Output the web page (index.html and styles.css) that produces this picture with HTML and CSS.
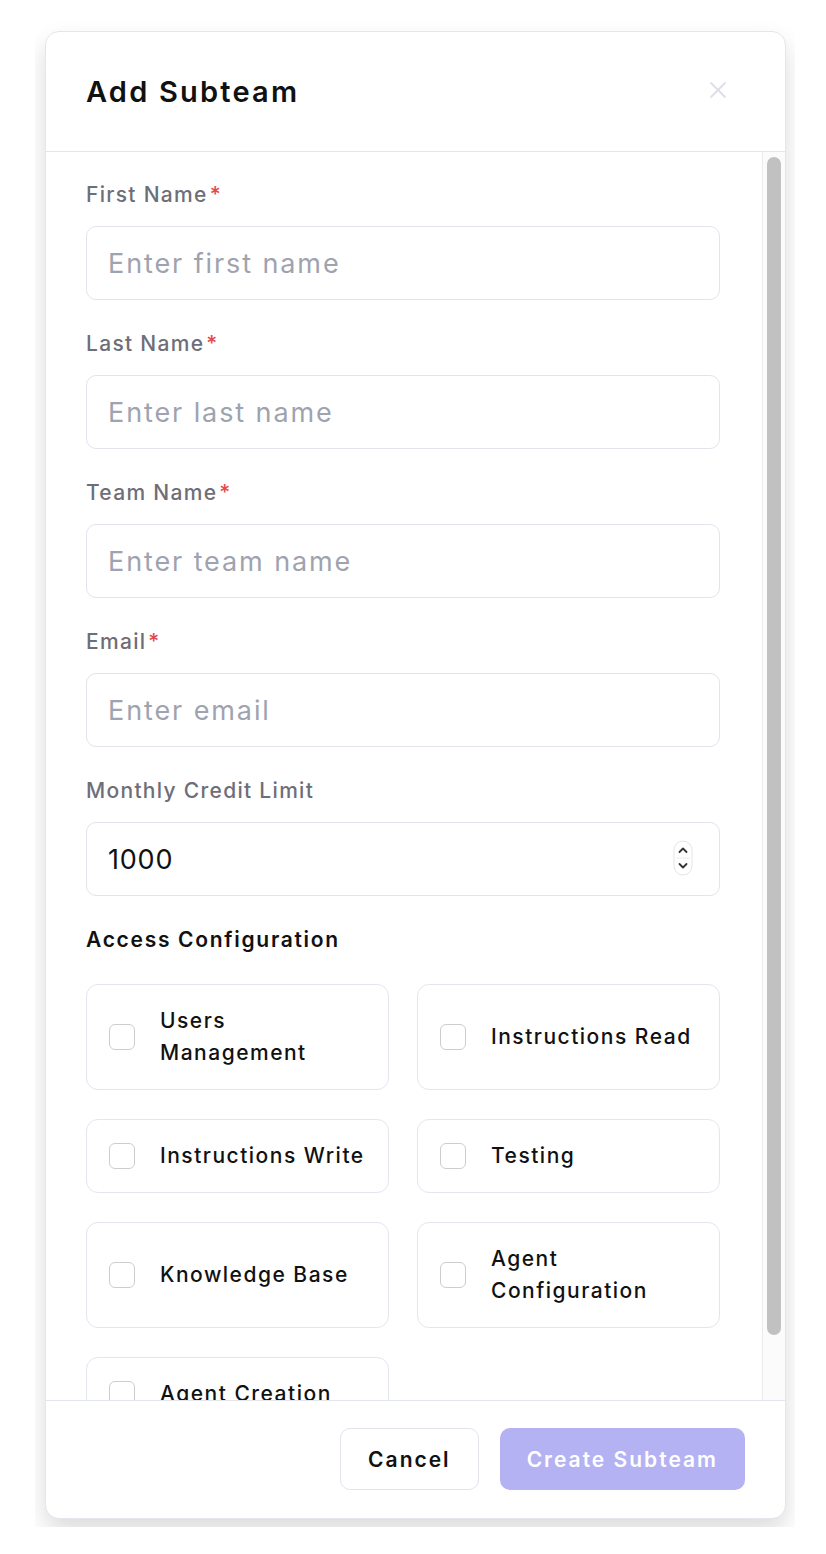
FILE: index.html
```html
<!DOCTYPE html>
<html lang="en">
<head>
<meta charset="UTF-8" />
<meta name="viewport" content="width=device-width, initial-scale=1" />
<title>Add Subteam</title>
<link rel="stylesheet" href="styles.css">
</head>
<body>

<div class="backdrop">
  <div class="modal" role="dialog" aria-labelledby="modalTitle">

    <!-- Header -->
    <div class="modal-header">
      <h2 id="modalTitle">Add Subteam</h2>
      <button class="close-btn" aria-label="Close">
        <svg width="18" height="18" viewBox="0 0 18 18" fill="none" stroke="currentColor" stroke-width="1.8" stroke-linecap="round">
          <path d="M2 2L16 16M16 2L2 16" />
        </svg>
      </button>
    </div>

    <!-- Form + scroll rail -->
    <div class="modal-main">
      <div class="modal-body">
        <div class="field">
          <label for="firstName">First Name<span class="req">*</span></label>
          <input type="text" id="firstName" placeholder="Enter first name" />
        </div>
        <div class="field">
          <label for="lastName">Last Name<span class="req">*</span></label>
          <input type="text" id="lastName" placeholder="Enter last name" />
        </div>
        <div class="field">
          <label for="teamName">Team Name<span class="req">*</span></label>
          <input type="text" id="teamName" placeholder="Enter team name" />
        </div>
        <div class="field">
          <label for="email">Email<span class="req">*</span></label>
          <input type="email" id="email" placeholder="Enter email" />
        </div>
        <div class="field">
          <label for="credits">Monthly Credit Limit</label>
          <div class="number-wrap">
            <input type="number" id="credits" value="1000" />
            <span class="spinner" aria-hidden="true">
              <svg width="20" height="36" viewBox="0 0 20 36" fill="none">
                <rect x="1" y="1" width="18" height="34" rx="9" stroke="#e4e4e8" />
                <line x1="3" y1="18" x2="17" y2="18" stroke="#ececef" />
                <path d="M6.5 12L10 8.5L13.5 12" stroke="#333" stroke-width="1.8" stroke-linecap="round" stroke-linejoin="round" />
                <path d="M6.5 24L10 27.5L13.5 24" stroke="#333" stroke-width="1.8" stroke-linecap="round" stroke-linejoin="round" />
              </svg>
            </span>
          </div>
        </div>

        <h3 class="section-title">Access Configuration</h3>

        <div class="access-grid">
          <label class="access-item"><input type="checkbox" /><span>Users Management</span></label>
          <label class="access-item"><input type="checkbox" /><span>Instructions Read</span></label>
          <label class="access-item"><input type="checkbox" /><span>Instructions Write</span></label>
          <label class="access-item"><input type="checkbox" /><span>Testing</span></label>
          <label class="access-item"><input type="checkbox" /><span>Knowledge Base</span></label>
          <label class="access-item"><input type="checkbox" /><span>Agent Configuration</span></label>
          <label class="access-item"><input type="checkbox" /><span>Agent Creation</span></label>
        </div>
      </div>

      <div class="scroll-rail"><div class="scroll-thumb"></div></div>
    </div>

    <!-- Footer -->
    <div class="modal-footer">
      <button class="btn btn-cancel">Cancel</button>
      <button class="btn btn-primary" disabled>Create Subteam</button>
    </div>

  </div>
</div>

</body>
</html>
```

FILE: styles.css
```css
/* Base */
html, body {
  margin: 0;
  padding: 0;
  background: #fff;
  font-family: 'Inter', 'Noto Sans', sans-serif;
  color: #111;
}

/* Backdrop crops the modal's shadow */
.backdrop {
  width: 760px;
  height: 1527px;
  margin-left: 35px;
  padding: 31px 9px 0 10px;
  box-sizing: border-box;
  overflow: hidden;
}

.modal {
  height: 1486px;
  background: #fff;
  border: 1px solid #e4e6ee;
  border-radius: 14px;
  box-shadow: 0 12px 24px rgba(0, 0, 0, 0.14);
  display: flex;
  flex-direction: column;
  overflow: hidden;
}

/* Header */
.modal-header {
  height: 119px;
  flex-shrink: 0;
  display: flex;
  align-items: center;
  justify-content: space-between;
  padding: 0 58px 0 40px;
  border-bottom: 1px solid #e4e6ee;
}
.modal-header h2 {
  margin: 0;
  font-size: 29px;
  font-weight: 600;
  letter-spacing: 2.2px;
}
.close-btn {
  background: none;
  border: none;
  padding: 0;
  margin-bottom: 4px;
  color: #dcdfe9;
  display: flex;
  cursor: pointer;
}

/* Body with its scroll rail */
.modal-main {
  flex: 1;
  min-height: 0;
  display: flex;
}
.modal-body {
  flex: 1;
  overflow: hidden;
  padding: 31px 42px 40px 40px;
}
.scroll-rail {
  width: 23px;
  flex-shrink: 0;
  box-sizing: border-box;
  background: #fbfbfb;
  border-left: 1px solid #ebebeb;
  padding: 5px 4px 0 4px;
}
.scroll-thumb {
  height: 1178px;
  background: #c1c1c1;
  border-radius: 8px;
}

/* Fields */
.field {
  margin-bottom: 32px;
}
.field label {
  display: block;
  font-size: 21px;
  line-height: 24px;
  font-weight: 500;
  letter-spacing: 1.3px;
  color: #6e6e78;
  margin-bottom: 19px;
}
.req {
  color: #e5484d;
  margin-left: 2px;
}
.field input {
  width: 100%;
  height: 74px;
  box-sizing: border-box;
  border: 1px solid #e2e4ec;
  border-radius: 10px;
  padding: 0 21px;
  font-family: inherit;
  font-size: 27px;
  letter-spacing: 0.8px;
  color: #111;
  outline: none;
  background: #fff;
}
.field input::placeholder {
  color: #9ea3af;
  letter-spacing: 1.9px;
}

.number-wrap {
  position: relative;
}
.number-wrap input::-webkit-inner-spin-button,
.number-wrap input::-webkit-outer-spin-button {
  -webkit-appearance: none;
  margin: 0;
}
.spinner {
  position: absolute;
  right: 27px;
  top: 18px;
  display: flex;
}

/* Access configuration */
.section-title {
  margin: 0 0 32px;
  font-size: 21px;
  line-height: 24px;
  font-weight: 600;
  letter-spacing: 1.7px;
}
.access-grid {
  display: grid;
  grid-template-columns: 1fr 1fr;
  gap: 29px 28px;
}
.access-item {
  display: flex;
  align-items: center;
  gap: 25px;
  padding: 20px 18px 20px 22px;
  border: 1px solid #e4e6ee;
  border-radius: 12px;
  font-size: 21px;
  line-height: 32px;
  font-weight: 500;
  letter-spacing: 1.5px;
  cursor: pointer;
}
.access-item input {
  -webkit-appearance: none;
  appearance: none;
  flex-shrink: 0;
  width: 26px;
  height: 26px;
  margin: 0;
  border: 1.5px solid #cdcdd1;
  border-radius: 6px;
  background: #fff;
}

/* Footer */
.modal-footer {
  height: 118px;
  flex-shrink: 0;
  box-sizing: border-box;
  border-top: 1px solid #e4e6ee;
  display: flex;
  justify-content: flex-end;
  align-items: flex-start;
  gap: 21px;
  padding: 27px 40px 0;
}
.btn {
  height: 62px;
  border-radius: 10px;
  font-family: inherit;
  font-size: 21px;
  font-weight: 600;
  letter-spacing: 2px;
  padding: 0 27px;
  cursor: pointer;
}
.btn-cancel {
  background: #fff;
  border: 1px solid #e2e4ec;
  color: #111;
}
.btn-primary {
  background: #b4b2f2;
  border: none;
  color: #fff;
}
.btn-primary:disabled {
  cursor: not-allowed;
}
```
